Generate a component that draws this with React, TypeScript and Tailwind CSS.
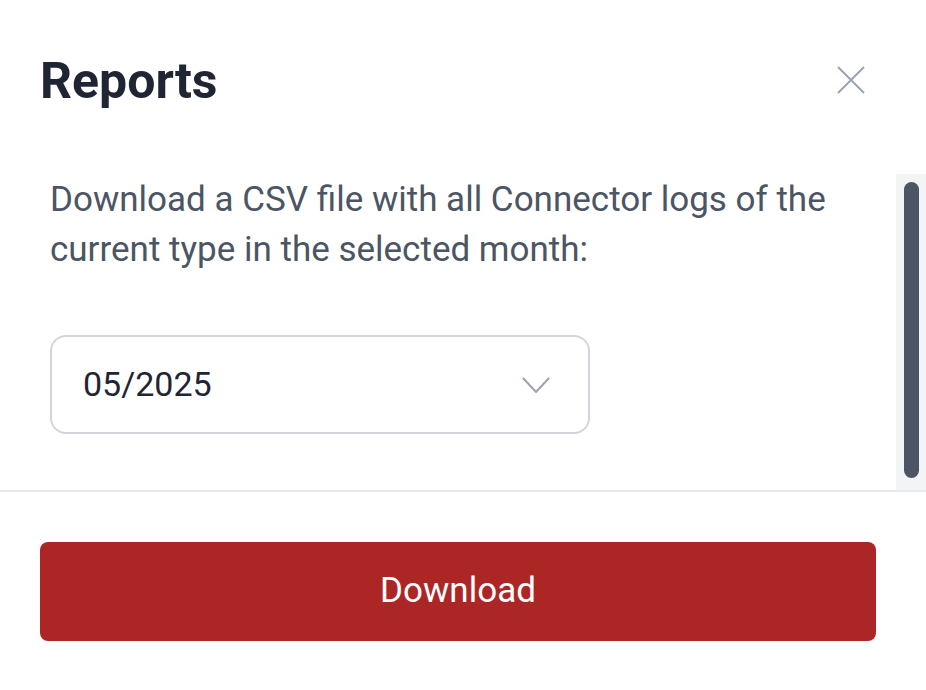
import React from 'react'

const App = () => {
    return (
        <div className="w-[926px] h-[690px] bg-white flex flex-col" style={{ fontFamily: 'Roboto, "Liberation Sans", sans-serif' }}>
            <div className="flex items-start justify-between pl-[40px] pr-[61px] pt-[56px]">
                <h1 className="text-[50px] leading-[50px] font-bold text-[#1f2533]">Reports</h1>
                <button className="w-[28px] h-[28px] mt-[10px] text-[#9ca3af]" aria-label="Close">
                    <svg viewBox="0 0 28 28" width="28" height="28" fill="none" stroke="currentColor" strokeWidth="2">
                        <path d="M1 1L27 27M27 1L1 27" />
                    </svg>
                </button>
            </div>

            <div className="flex h-[316px] mt-[68px]">
                <div className="flex-1 pl-[50px]">
                    <p className="w-[820px] mt-[1px] text-[35px] leading-[50px] text-[#4b5563]">
                        Download a CSV file with all Connector logs of the current type in the selected month:
                    </p>
                    <div className="mt-[60px] w-[540px] h-[99px] border-2 border-[#d1d5db] rounded-[16px] flex items-center justify-between pl-[31px] pr-[38px]">
                        <span className="text-[34px] text-[#1f2533]">05/2025</span>
                        <svg viewBox="0 0 28 16" width="28" height="16" fill="none" stroke="#9ca3af" strokeWidth="2">
                            <path d="M1 1L14 15L27 1" />
                        </svg>
                    </div>
                </div>
                <div className="w-[30px] bg-[#f3f4f6] pt-[8px] pb-[12px] pl-[8px]">
                    <div className="w-[15px] h-full rounded-full bg-[#4b5563]"></div>
                </div>
            </div>

            <div className="h-[2px] bg-[#e8e9ec]"></div>

            <div className="pl-[40px] pr-[50px] pt-[50px]">
                <button className="w-full h-[99px] rounded-[8px] bg-[#ad2626] text-white text-[35px]">
                    Download
                </button>
            </div>
        </div>
    )
}

export default App
